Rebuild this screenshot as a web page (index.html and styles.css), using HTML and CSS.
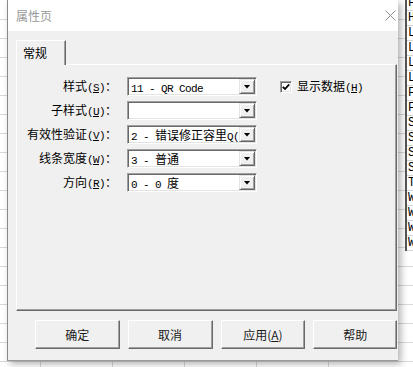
FILE: index.html
```html
<!DOCTYPE html>
<html lang="zh-CN">
<head>
    <meta charset="UTF-8">
    <meta name="viewport" content="width=device-width, initial-scale=1.0">
    <title>属性页</title>
    <link rel="stylesheet" href="styles.css">
</head>
<body>
    <div class="sheet-col">
        <div class="cell">F</div>
        <div class="cell">H</div>
        <div class="cell">L</div>
        <div class="cell">L</div>
        <div class="cell">L</div>
        <div class="cell">L</div>
        <div class="cell">F</div>
        <div class="cell">F</div>
        <div class="cell">S</div>
        <div class="cell">S</div>
        <div class="cell">S</div>
        <div class="cell">S</div>
        <div class="cell">T</div>
        <div class="cell">W</div>
        <div class="cell">W</div>
        <div class="cell">W</div>
        <div class="cell">W</div>
    </div>

    <div class="dialog">
        <div class="titlebar">
            <span class="title">属性页</span>
            <svg class="close" viewBox="0 0 11 11" width="11" height="11">
                <path d="M0.5 0.5 L10.5 10.5 M10.5 0.5 L0.5 10.5" stroke="#8c8c8c" stroke-width="1" fill="none"/>
            </svg>
        </div>

        <div class="dialog-body">
            <div class="tabs">
                <div class="tab active">常规</div>
            </div>

            <div class="panel">
                <div class="form">
                    <label>样式<span class="key">(<u>S</u>)</span>：</label>
                    <div class="combo">
                        <div class="value"><span class="en">11 - QR Code</span></div>
                        <div class="drop"><i></i></div>
                    </div>
                    <div class="check">
                        <span class="box">
                            <svg viewBox="0 0 8 8" width="8" height="8">
                                <path d="M0.8 3.8 L3 6 L7.2 1.4" stroke="#000" stroke-width="1.8" fill="none"/>
                            </svg>
                        </span>
                        <span>显示数据<span class="key">(<u>H</u>)</span></span>
                    </div>

                    <label>子样式<span class="key">(<u>U</u>)</span>：</label>
                    <div class="combo">
                        <div class="value"></div>
                        <div class="drop"><i></i></div>
                    </div>

                    <label>有效性验证<span class="key">(<u>V</u>)</span>：</label>
                    <div class="combo">
                        <div class="value"><span class="en">2 - </span>错误修正容里<span class="en">Q(25%)</span></div>
                        <div class="drop"><i></i></div>
                    </div>

                    <label>线条宽度<span class="key">(<u>W</u>)</span>：</label>
                    <div class="combo">
                        <div class="value"><span class="en">3 - </span>普通</div>
                        <div class="drop"><i></i></div>
                    </div>

                    <label>方向<span class="key">(<u>R</u>)</span>：</label>
                    <div class="combo">
                        <div class="value"><span class="en">0 - 0 </span>度</div>
                        <div class="drop"><i></i></div>
                    </div>
                </div>
            </div>

            <div class="buttons">
                <button>确定</button>
                <button>取消</button>
                <button>应用(<u>A</u>)</button>
                <button>帮助</button>
            </div>
        </div>
    </div>
</body>
</html>
```

FILE: styles.css
```css
body {
    margin: 0;
    width: 413px;
    height: 367px;
    overflow: hidden;
    position: relative;
    font-family: "Noto Sans CJK SC", sans-serif;
    font-size: 12px;
    color: #000;
    background-color: #fff;
    background-image:
        repeating-linear-gradient(to bottom, transparent 0 18px, #d9d9d9 18px 19px),
        repeating-linear-gradient(to right, transparent 0 71px, #d9d9d9 71px 72px);
    background-position: 0 1px, -31px 0;
}

/* sheet behind the dialog */
.sheet-col {
    position: absolute;
    left: 405px;
    top: -4px;
    width: 8px;
    border-left: 2px solid #555;
    background: #fff;
    overflow: hidden;
}

.cell {
    height: 15px;
    box-sizing: border-box;
    border-bottom: 1px solid #d4d4d4;
    padding-left: 1px;
    font-family: "Liberation Mono", monospace;
    font-size: 12px;
    line-height: 14px;
}

/* dialog window */
.dialog {
    position: absolute;
    left: 7px;
    top: 0;
    width: 391px;
    height: 361px;
    box-sizing: border-box;
    border-left: 1px solid #8a8a8a;
    border-bottom: 1px solid #9a9a9a;
    background: #f0f0f0;
    box-shadow: 3px 3px 7px rgba(0, 0, 0, 0.3);
}

.titlebar {
    height: 31px;
    background: #fff;
    display: flex;
    align-items: center;
    padding: 0 2px 0 8px;
}

.title {
    flex: 1;
    color: #999;
    line-height: 16px;
}

.close {
    display: block;
}

.dialog-body {
    padding: 9px 1px 0 8px;
}

.tabs {
    display: flex;
    height: 24px;
}

.tab {
    position: relative;
    z-index: 1;
    width: 50px;
    height: 25px;
    box-sizing: border-box;
    border-top: 1px solid #fff;
    border-left: 1px solid #fff;
    border-right: 1px solid #696969;
    box-shadow: inset -1px 0 #a0a0a0;
    background: #f0f0f0;
    padding: 4px 0 0 6px;
    line-height: 16px;
}

.panel {
    height: 247px;
    box-sizing: border-box;
    border: 1px solid;
    border-color: #fff #696969 #696969 #fff;
    box-shadow: inset -1px -1px #a0a0a0;
    padding-top: 12px;
}

.form {
    display: grid;
    grid-template-columns: 100px 130px auto;
    grid-auto-rows: 19px;
    column-gap: 10px;
    row-gap: 5px;
    align-items: center;
}

.form label {
    grid-column: 1;
    text-align: right;
    white-space: nowrap;
    line-height: 16px;
}

.key {
    font-family: "Liberation Mono", monospace;
    font-size: 11px;
    letter-spacing: -0.6px;
}

.en {
    font-family: "Liberation Mono", monospace;
    font-size: 11px;
    letter-spacing: -0.6px;
}

.combo {
    grid-column: 2;
    height: 19px;
    box-sizing: border-box;
    display: flex;
    border: 1px solid;
    border-color: #a0a0a0 #fff #fff #a0a0a0;
    box-shadow: inset 1px 1px #696969, inset -1px -1px #e3e3e3;
    background: #fff;
    padding: 1px;
}

.combo .value {
    flex: 1;
    padding-left: 2px;
    line-height: 15px;
    white-space: nowrap;
    overflow: hidden;
}

.drop {
    width: 16px;
    height: 15px;
    box-sizing: border-box;
    border: 1px solid;
    border-color: #e3e3e3 #696969 #696969 #e3e3e3;
    box-shadow: inset 1px 1px #fff, inset -1px -1px #a0a0a0;
    background: #f0f0f0;
    display: flex;
    align-items: center;
    justify-content: center;
}

.drop i {
    width: 7px;
    height: 4px;
    background: #000;
    clip-path: polygon(0 0, 100% 0, 50% 100%);
}

.check {
    grid-column: 3;
    grid-row: 1;
    margin-left: 13px;
    display: flex;
    align-items: center;
    gap: 5px;
    line-height: 16px;
    white-space: nowrap;
}

.check .box {
    width: 12px;
    height: 12px;
    box-sizing: border-box;
    border: 1px solid;
    border-color: #a0a0a0 #fff #fff #a0a0a0;
    box-shadow: inset 1px 1px #696969, inset -1px -1px #e3e3e3;
    background: #fff;
    display: flex;
    align-items: center;
    justify-content: center;
}

.buttons {
    display: flex;
    gap: 8px;
    margin-top: 9px;
    padding-left: 19px;
}

.buttons button {
    width: 87px;
    height: 29px;
    box-sizing: border-box;
    border: 1px solid;
    border-color: #fff #696969 #696969 #fff;
    box-shadow: inset -1px -1px #a0a0a0;
    background: #f0f0f0;
    font-family: "Noto Sans CJK SC", sans-serif;
    font-size: 12px;
    color: #1a1a1a;
    padding: 0;
}

.buttons button:last-child {
    width: 86px;
}
```
